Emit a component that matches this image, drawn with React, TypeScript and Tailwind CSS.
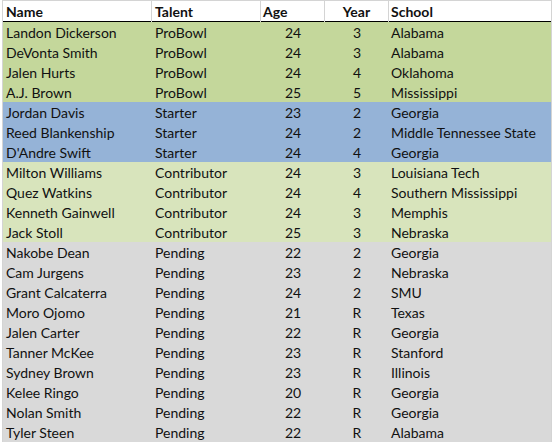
import React from "react";

type Row = { name: string; talent: string; age: number; year: string; school: string };

const tiers: Record<string, string> = {
  ProBowl: "bg-[#c4d79b]",
  Starter: "bg-[#95b3d7]",
  Contributor: "bg-[#d8e4bc]",
  Pending: "bg-[#d9d9d9]",
};

const rows: Row[] = [
  { name: "Landon Dickerson", talent: "ProBowl", age: 24, year: "3", school: "Alabama" },
  { name: "DeVonta Smith", talent: "ProBowl", age: 24, year: "3", school: "Alabama" },
  { name: "Jalen Hurts", talent: "ProBowl", age: 24, year: "4", school: "Oklahoma" },
  { name: "A.J. Brown", talent: "ProBowl", age: 25, year: "5", school: "Mississippi" },
  { name: "Jordan Davis", talent: "Starter", age: 23, year: "2", school: "Georgia" },
  { name: "Reed Blankenship", talent: "Starter", age: 24, year: "2", school: "Middle Tennessee State" },
  { name: "D'Andre Swift", talent: "Starter", age: 24, year: "4", school: "Georgia" },
  { name: "Milton Williams", talent: "Contributor", age: 24, year: "3", school: "Louisiana Tech" },
  { name: "Quez Watkins", talent: "Contributor", age: 24, year: "4", school: "Southern Mississippi" },
  { name: "Kenneth Gainwell", talent: "Contributor", age: 24, year: "3", school: "Memphis" },
  { name: "Jack Stoll", talent: "Contributor", age: 25, year: "3", school: "Nebraska" },
  { name: "Nakobe Dean", talent: "Pending", age: 22, year: "2", school: "Georgia" },
  { name: "Cam Jurgens", talent: "Pending", age: 23, year: "2", school: "Nebraska" },
  { name: "Grant Calcaterra", talent: "Pending", age: 24, year: "2", school: "SMU" },
  { name: "Moro Ojomo", talent: "Pending", age: 21, year: "R", school: "Texas" },
  { name: "Jalen Carter", talent: "Pending", age: 22, year: "R", school: "Georgia" },
  { name: "Tanner McKee", talent: "Pending", age: 23, year: "R", school: "Stanford" },
  { name: "Sydney Brown", talent: "Pending", age: 23, year: "R", school: "Illinois" },
  { name: "Kelee Ringo", talent: "Pending", age: 20, year: "R", school: "Georgia" },
  { name: "Nolan Smith", talent: "Pending", age: 22, year: "R", school: "Georgia" },
  { name: "Tyler Steen", talent: "Pending", age: 22, year: "R", school: "Alabama" },
];

const cols = "grid grid-cols-[149px_109px_64px_64px_162px]";

export default function App() {
  return (
    <div className="w-[552px] h-[442px] bg-white overflow-hidden font-['Lato',sans-serif] text-[14px] text-[#111]">
      <div className="ml-[2px] w-[550px] border-l border-r border-t border-[#d4d4d4]">
        {/* header */}
        <div className={`${cols} h-[21px] bg-white border-b border-black font-bold leading-[21px]`}>
          <div className="pl-[3px] border-r border-[#d4d4d4]">Name</div>
          <div className="pl-[3px] border-r border-[#d4d4d4]">Talent</div>
          <div className="pl-[2px] border-r border-[#d4d4d4]">Age</div>
          <div className="text-center border-r border-[#d4d4d4]">Year</div>
          <div className="pl-[2px]">School</div>
        </div>

        {rows.map((r) => (
          <div key={r.name} className={`${cols} h-[20px] leading-[21px] ${tiers[r.talent]}`}>
            <div className="pl-[3px] whitespace-nowrap">{r.name}</div>
            <div className="pl-[3px]">{r.talent}</div>
            <div className="text-center">{r.age}</div>
            <div className="text-center">{r.year}</div>
            <div className="pl-[2px] whitespace-nowrap">{r.school}</div>
          </div>
        ))}
      </div>
    </div>
  );
}
